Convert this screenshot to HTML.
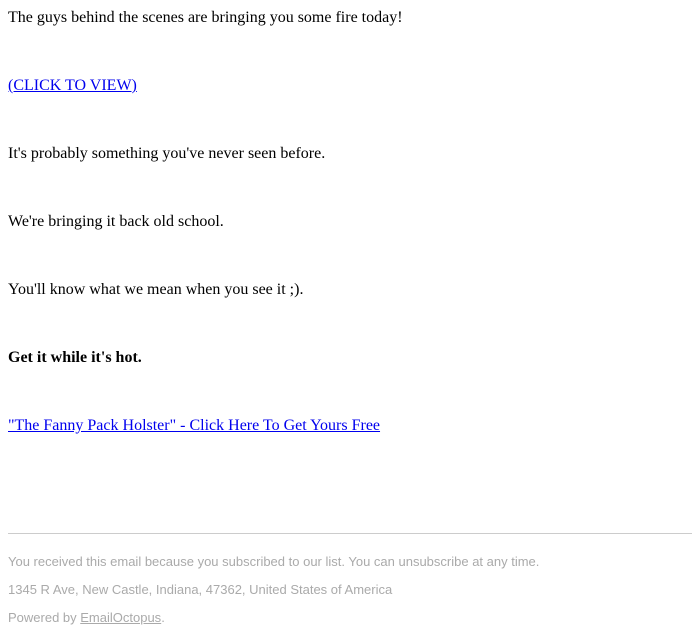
<!DOCTYPE html>
<html><head><style>
body{margin:0;width:700px;height:638px;background:#fff;position:relative;font-family:"Liberation Serif",serif;font-size:16px;color:#000}
.p{position:absolute;left:8px;white-space:nowrap;line-height:18px}
a{color:#0000ee;text-decoration:underline}
.f{position:absolute;left:8px;font-family:"Liberation Sans",sans-serif;font-size:13px;color:#aaa;white-space:nowrap;line-height:14px}
.f a{color:#aaa}
hr{position:absolute;left:8px;width:684px;margin:0;border:0;border-top:1px solid #ccc}
</style></head><body>
<div class="p" style="top:9px">The guys behind the scenes are bringing you some fire today!</div>
<div class="p" style="top:77px"><a>(CLICK TO VIEW)</a></div>
<div class="p" style="top:145px">It's probably something you've never seen before.</div>
<div class="p" style="top:213px">We're bringing it back old school.</div>
<div class="p" style="top:281px">You'll know what we mean when you see it ;).</div>
<div class="p" style="top:349px"><b>Get it while it's hot.</b></div>
<div class="p" style="top:417px"><a>"The Fanny Pack Holster" - Click Here To Get Yours Free</a></div>
<hr style="top:533px">
<div class="f" style="top:555px">You received this email because you subscribed to our list. You can unsubscribe at any time.</div>
<div class="f" style="top:583px">1345 R Ave, New Castle, Indiana, 47362, United States of America</div>
<div class="f" style="top:611px">Powered by <a>EmailOctopus</a>.</div>
</body></html>
